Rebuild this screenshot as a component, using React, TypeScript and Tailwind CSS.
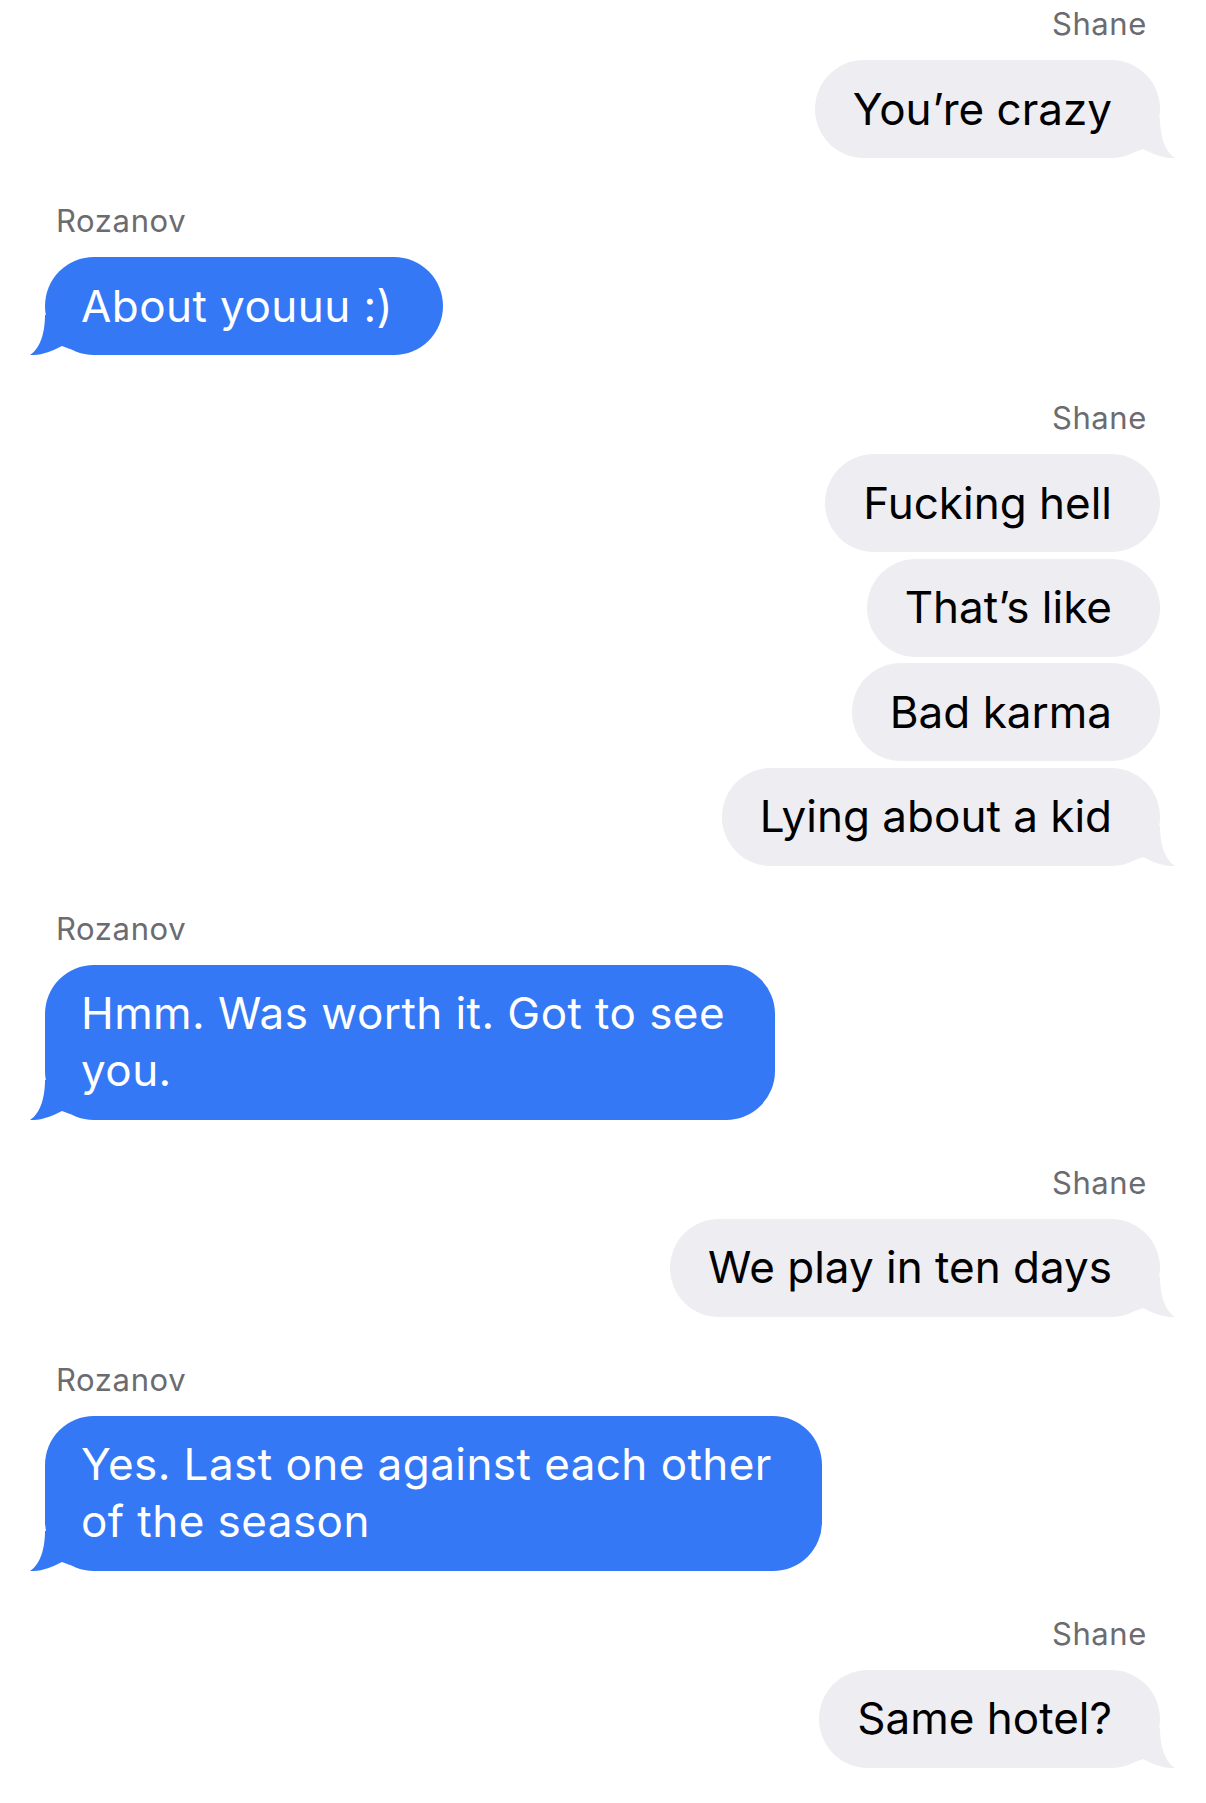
type Side = "left" | "right";

interface Group {
  from: string;
  side: Side;
  messages: string[];
}

const thread: Group[] = [
  { from: "Shane", side: "right", messages: ["You’re crazy"] },
  { from: "Rozanov", side: "left", messages: ["About youuu :)"] },
  {
    from: "Shane",
    side: "right",
    messages: ["Fucking hell", "That’s like", "Bad karma", "Lying about a kid"],
  },
  { from: "Rozanov", side: "left", messages: ["Hmm. Was worth it. Got to see\nyou."] },
  { from: "Shane", side: "right", messages: ["We play in ten days"] },
  { from: "Rozanov", side: "left", messages: ["Yes. Last one against each other\nof the season"] },
  { from: "Shane", side: "right", messages: ["Same hotel?"] },
];

function Tail({ side }: { side: Side }) {
  const color = side === "right" ? "#EDEDF2" : "#3478F6";
  return (
    <svg
      viewBox="0 0 40 40"
      className={
        side === "right"
          ? "absolute bottom-0 -right-[15px] h-[40px] w-[40px]"
          : "absolute bottom-0 -left-[15px] h-[40px] w-[40px] -scale-x-100"
      }
    >
      <path d="M0 0H25C25 16 29 33 40 40C30 40.5 19 37 8 31L0 34Z" fill={color} />
    </svg>
  );
}

function Bubble({ text, side, tail }: { text: string; side: Side; tail: boolean }) {
  return (
    <div
      className={
        side === "right"
          ? "relative whitespace-pre-line rounded-[49px] bg-[#EDEDF2] py-[20.5px] pl-[38px] pr-[48px] text-[44px] leading-[57px] text-black"
          : "relative whitespace-pre-line rounded-[49px] bg-[#3478F6] py-[20.5px] pl-[36px] pr-[50px] text-[44px] leading-[57px] tracking-[0.01em] text-white"
      }
    >
      {tail && <Tail side={side} />}
      <span className="relative">{text}</span>
    </div>
  );
}

export default function App() {
  return (
    <div
      className="min-h-screen w-[1206px] bg-white pl-[45px] pr-[46px] pt-[6px] pb-[30px]"
      style={{ fontFamily: "Inter, 'Noto Sans', sans-serif" }}
    >
      <div className="flex flex-col gap-[45px]">
        {thread.map((g, i) => (
          <div
            key={i}
            className={g.side === "right" ? "flex flex-col items-end" : "flex flex-col items-start"}
          >
            <div
              className={
                g.side === "right"
                  ? "pr-[13px] text-[31px] leading-[36px] tracking-[0.02em] text-[#6b6b70]"
                  : "pl-[11px] text-[31px] leading-[36px] tracking-[0.02em] text-[#6b6b70]"
              }
            >
              {g.from}
            </div>
            <div
              className={
                g.side === "right"
                  ? "mt-[18px] flex flex-col items-end gap-[6.5px]"
                  : "mt-[18px] flex flex-col items-start gap-[6.5px]"
              }
            >
              {g.messages.map((m, j) => (
                <Bubble key={j} text={m} side={g.side} tail={j === g.messages.length - 1} />
              ))}
            </div>
          </div>
        ))}
      </div>
    </div>
  );
}
